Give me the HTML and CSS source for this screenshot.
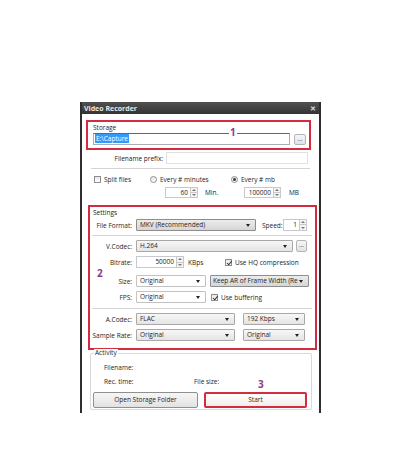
FILE: index.html
```html
<!DOCTYPE html>
<html lang="en">
<head>
    <meta charset="UTF-8">
    <meta name="viewport" content="width=device-width, initial-scale=1.0">
    <title>Video Recorder</title>
    <link rel="stylesheet" href="styles.css">
</head>
<body>
    <div class="window">
        <div class="titlebar">
            <span class="title">Video Recorder</span>
            <span class="close">&#x2715;</span>
        </div>

        <div class="content">
            <div class="mark-box storage-box">
                <div class="group-label">Storage</div>
                <div class="row storage-row">
                    <div class="textbox path"><span class="selected">E:\Capture</span></div>
                    <div class="button dots">...</div>
                </div>
                <span class="mark mark-1">1</span>
            </div>

            <div class="panel">
                <div class="row prefix-row">
                    <span class="label prefix-label">Filename prefix:</span>
                    <div class="textbox prefix"></div>
                </div>
                <div class="sep split-sep"></div>
                <div class="row split-row">
                    <span class="opt opt-split"><span class="check"></span>Split files</span>
                    <span class="opt opt-min"><span class="radio"></span>Every # minutes</span>
                    <span class="opt"><span class="radio on"></span>Every # mb</span>
                </div>
                <div class="row spin-row">
                    <div class="spin spin-min"><span class="spin-value">60</span><span class="arrows"></span></div>
                    <span class="unit unit-min">Min.</span>
                    <div class="spin spin-mb"><span class="spin-value">100000</span><span class="arrows"></span></div>
                    <span class="unit unit-mb">MB</span>
                </div>
            </div>

            <div class="mark-box settings-box">
                <div class="group-label">Settings</div>
                <div class="row form-row first">
                    <span class="label">File Format:</span>
                    <div class="combo gray w-format">MKV (Recommended)</div>
                    <span class="speed-label">Speed:</span>
                    <div class="spin spin-speed"><span class="spin-value">1</span><span class="arrows"></span></div>
                </div>
                <div class="sep settings-sep"></div>
                <div class="row form-row">
                    <span class="label">V.Codec:</span>
                    <div class="combo w-codec">H.264</div>
                    <div class="button dots codec-dots">...</div>
                </div>
                <div class="row form-row">
                    <span class="label">Bitrate:</span>
                    <div class="spin spin-bitrate"><span class="spin-value">50000</span><span class="arrows"></span></div>
                    <span class="unit unit-kbps">KBps</span>
                    <span class="opt"><span class="check on"></span>Use HQ compression</span>
                </div>
                <div class="row form-row size-row">
                    <span class="label">Size:</span>
                    <div class="combo white w-small">Original</div>
                    <div class="combo gray w-ar">Keep AR of Frame Width (Re</div>
                </div>
                <div class="row form-row">
                    <span class="label">FPS:</span>
                    <div class="combo white w-small">Original</div>
                    <span class="opt buffering"><span class="check on"></span>Use buffering</span>
                </div>
                <div class="sep settings-sep audio-sep"></div>
                <div class="row form-row">
                    <span class="label">A.Codec:</span>
                    <div class="combo w-audio">FLAC</div>
                    <div class="combo w-rate">192 Kbps</div>
                </div>
                <div class="row form-row">
                    <span class="label">Sample Rate:</span>
                    <div class="combo w-audio">Original</div>
                    <div class="combo w-rate">Original</div>
                </div>
                <span class="mark mark-2">2</span>
            </div>

            <div class="activity">
                <div class="activity-title">Activity</div>
                <div class="info-row first-info"><span>Filename:</span></div>
                <div class="info-row"><span class="info-cell">Rec. time:</span><span>File size:</span></div>
                <div class="row button-row">
                    <div class="button big">Open Storage Folder</div>
                    <div class="button big start">Start</div>
                </div>
                <span class="mark mark-3">3</span>
            </div>
        </div>
    </div>
</body>
</html>
```

FILE: styles.css
```css
* {
    box-sizing: border-box;
}

body {
    margin: 0;
    background-color: #fff;
    font-family: "Open Sans", "Noto Sans", sans-serif;
    font-size: 6.5px;
    color: #1e1e1e;
}

.window {
    margin: 102px 0 0 80px;
    width: 241px;
    height: 311px;
    border-left: 2px solid #2e2e2e;
    border-right: 2px solid #2e2e2e;
    background-color: #fff;
}

.titlebar {
    height: 12px;
    background: linear-gradient(#505050, #333);
    color: #e6e6e6;
    display: flex;
    justify-content: space-between;
    align-items: center;
    padding: 0 3px 0 2px;
    font-size: 7px;
    font-weight: bold;
}

.close {
    font-size: 7px;
    color: #ddd;
}

.row {
    display: flex;
    align-items: center;
}

/* red annotation frames */
.mark-box {
    position: relative;
    border: 2px solid #d22c3e;
}

.mark {
    position: absolute;
    color: #8e3a8c;
    font-weight: bold;
    font-size: 10px;
    line-height: 10px;
    background-color: #fff;
    padding: 0 1px;
}

.group-label {
    line-height: 9px;
}

.storage-box {
    margin: 6px 0 0 4px;
    width: 225px;
    height: 30px;
    padding: 0 0 0 5px;
}

.storage-box .group-label {
    padding-left: -1px;
    margin-top: 1px;
}

.storage-row {
    margin-top: 1px;
}

.mark-1 {
    left: 141px;
    top: 5px;
}

.textbox {
    height: 12px;
    border: 1px solid #c8cbd0;
    background-color: #fff;
    line-height: 10px;
    padding-left: 1px;
}

.path {
    width: 197px;
    border-color: #abadb3;
    border-top-color: #596a80;
}

.selected {
    background-color: #3399ff;
    color: #fff;
    padding: 0 1px;
}

.button {
    border: 1px solid #909090;
    border-radius: 2px;
    background: linear-gradient(#f6f6f6, #e2e2e2);
    text-align: center;
}

.dots {
    width: 12px;
    height: 11px;
    margin-left: 4px;
    line-height: 8px;
    color: #555;
    border-color: #b5b5b5;
}

.panel {
    padding-left: 4px;
}

.prefix-row {
    margin-top: 2px;
}

.prefix-label {
    width: 77px;
    text-align: right;
}

.prefix {
    width: 142px;
    margin-left: 3px;
    border-color: #e0e0e0;
}

.sep {
    height: 1px;
    background-color: #d4d4d4;
}

.split-sep {
    margin: 4px 0 0 5px;
    width: 219px;
}

.split-row {
    margin: 5px 0 0 8px;
    height: 10px;
}

.opt {
    display: flex;
    align-items: center;
}

.opt-split {
    width: 56px;
}

.opt-min {
    width: 81px;
}

.check,
.radio {
    width: 7px;
    height: 7px;
    border: 1px solid #8e8f8f;
    background: linear-gradient(#e6e6e6, #fff);
    margin-right: 3px;
    position: relative;
    flex: none;
}

.radio {
    border-radius: 50%;
}

.radio.on::after {
    content: "";
    position: absolute;
    left: 1px;
    top: 1px;
    width: 3px;
    height: 3px;
    border-radius: 50%;
    background-color: #2c3a4a;
}

.check.on::after {
    content: "";
    position: absolute;
    left: 1.5px;
    top: 0;
    width: 2px;
    height: 3.5px;
    border: solid #333;
    border-width: 0 1px 1px 0;
    transform: rotate(40deg);
}

.spin-row {
    margin: 3px 0 0 79px;
    height: 11px;
}

.spin {
    height: 11px;
    border: 1px solid #c5c8cc;
    background-color: #fff;
    display: flex;
}

.spin-value {
    flex: 1;
    text-align: right;
    line-height: 9px;
    padding-right: 2px;
}

.arrows {
    width: 7px;
    border-left: 1px solid #c9c9c9;
    background: linear-gradient(#f4f4f4 0, #f4f4f4 45%, #c9c9c9 45%, #c9c9c9 55%, #f4f4f4 55%);
    position: relative;
}

.arrows::before,
.arrows::after {
    content: "";
    position: absolute;
    left: 1px;
    border-left: 2px solid transparent;
    border-right: 2px solid transparent;
}

.arrows::before {
    top: 1px;
    border-bottom: 2px solid #777;
}

.arrows::after {
    bottom: 1px;
    border-top: 2px solid #777;
}

.spin-min {
    width: 33px;
}

.unit-min {
    width: 46px;
    padding-left: 7px;
}

.spin-mb {
    width: 37px;
}

.unit-mb {
    margin-left: 8px;
}

.settings-box {
    margin: 7px 0 0 6px;
    width: 229px;
    height: 145px;
    padding-left: 3px;
}

.settings-box .group-label {
    margin-top: 1px;
    line-height: 10px;
}

.form-row {
    height: 12px;
    margin-top: 4px;
    margin-left: -3px;
}

.form-row.first {
    margin-top: 1px;
}

.form-row .label {
    width: 42px;
    text-align: right;
    margin-right: 4px;
    flex: none;
}

.combo {
    height: 12px;
    border: 1px solid #a8a8a8;
    border-radius: 1px;
    background: linear-gradient(#f7f7f7, #e4e4e4);
    line-height: 10px;
    padding-left: 3px;
    position: relative;
    white-space: nowrap;
    overflow: hidden;
    flex: none;
}

.combo::after {
    content: "";
    position: absolute;
    right: 5px;
    top: 4px;
    border-left: 2.5px solid transparent;
    border-right: 2.5px solid transparent;
    border-top: 3px solid #222;
}

.combo.gray {
    background: linear-gradient(#ececec, #d6d6d6);
    border-color: #8d8d8d;
}

.combo.white {
    background: #fff;
    border-color: #c2c2c2;
}

.w-format {
    width: 120px;
}

.speed-label {
    margin-left: 6px;
    width: 21px;
}

.spin-speed {
    width: 24px;
    height: 12px;
}

.settings-sep {
    margin: 4px 0 0 -1px;
    width: 220px;
}

.w-codec {
    width: 157px;
}

.codec-dots {
    margin-left: 3px;
    width: 11px;
    height: 12px;
}

.spin-bitrate {
    width: 48px;
    height: 12px;
}

.unit-kbps {
    width: 41px;
    padding-left: 4px;
}

.size-row {
    margin-top: 7px;
}

.w-small {
    width: 70px;
}

.w-ar {
    width: 99px;
    margin-left: 4px;
    padding-left: 2px;
}

.buffering {
    margin-left: 5px;
}

.audio-sep {
    margin-top: 5px;
}

.w-audio {
    width: 99px;
}

.w-rate {
    width: 62px;
    margin-left: 8px;
}

.mark-2 {
    left: 6px;
    top: 61px;
    background: none;
}

.activity {
    position: relative;
    margin: 3px 0 0 8px;
    width: 222px;
    height: 57px;
    border: 1px solid #d9d9d9;
    border-radius: 2px;
    padding: 0 0 0 2px;
}

.activity-title {
    margin: -5px 0 0 1px;
    padding: 0 1px;
    width: max-content;
    line-height: 8px;
    background-color: #fff;
}

.info-row {
    display: flex;
    line-height: 10px;
    margin-top: 4px;
    padding-left: 11px;
}

.info-row.first-info {
    margin-top: 6px;
}

.info-cell {
    width: 90px;
}

.button-row {
    margin-top: 5px;
}

.big {
    width: 105px;
    height: 16px;
    line-height: 14px;
    border-color: #8e8f8f;
}

.start {
    width: 103px;
    margin-left: 6px;
    border: 2px solid #d22c3e;
    background: linear-gradient(#fefefe, #f3eded);
    line-height: 12px;
}

.mark-3 {
    left: 166px;
    top: 25px;
    background: none;
}
```
